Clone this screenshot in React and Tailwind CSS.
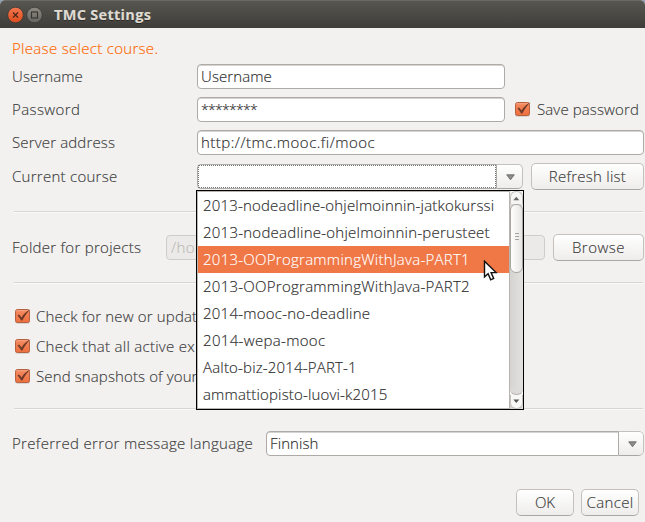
const COURSES = [
  { name: "2013-nodeadline-ohjelmoinnin-jatkokurssi", tracking: "tracking-[0.18px]" },
  { name: "2013-nodeadline-ohjelmoinnin-perusteet", tracking: "tracking-[0.24px]" },
  { name: "2013-OOProgrammingWithJava-PART1", tracking: "tracking-[0.26px]", selected: true },
  { name: "2013-OOProgrammingWithJava-PART2", tracking: "tracking-[0.26px]" },
  { name: "2014-mooc-no-deadline", tracking: "tracking-[0.24px]" },
  { name: "2014-wepa-mooc", tracking: "tracking-[0.33px]" },
  { name: "Aalto-biz-2014-PART-1", tracking: "tracking-[0.18px]" },
  { name: "ammattiopisto-luovi-k2015", tracking: "tracking-[0.17px]" },
];

const FIELD =
  "flex h-[25px] items-center rounded-[4px] border border-[#aeaba6] bg-white pl-[3px] pb-px text-[#2c2c2c] shadow-[inset_0_1px_0_#d5d3d0]";

function CheckBox() {
  return (
    <svg width="18" height="17" viewBox="0 0 18 17" className="shrink-0">
      <defs>
        <linearGradient id="box" x1="0" y1="0" x2="0" y2="1">
          <stop offset="0" stopColor="#f58a62" />
          <stop offset="1" stopColor="#ee6f3f" />
        </linearGradient>
      </defs>
      <rect x="1" y="2" width="15" height="14" rx="2.5" fill="#d9d5d2" />
      <rect x="1.5" y="1.5" width="14" height="13" rx="2" fill="url(#box)" stroke="#b5603f" />
      <path d="M2.5 2.7h12" stroke="#f9ab8c" strokeWidth="0.8" />
      <path d="M3.4 7.6 5 6.4 7.6 9.4C9.6 6 12 3.6 16.6 1.2 13 4.5 10.6 8.2 8.3 12.4H7.1C6 10.4 4.9 9 3.4 7.6Z" fill="#6d3a28" />
    </svg>
  );
}

function Divider() {
  return <div className="ml-[14px] mr-[2px] h-[2px] shrink-0 border-t border-[#d8d6d3] bg-[#fafafa]" />;
}

function Button({ className, children }) {
  return (
    <div
      className={`flex h-[27px] shrink-0 items-center justify-center rounded-[5px] border border-[#c4c1bd] border-b-[#aaa7a3] bg-linear-to-b from-white to-[#eeedeb] pb-px text-[#3c3c3c] ${className}`}
    >
      {children}
    </div>
  );
}

function ComboArrow() {
  return (
    <div className="flex h-[25px] w-[26px] shrink-0 items-center justify-center rounded-r-[5px] border border-l-0 border-[#c4c1bd] border-b-[#aaa7a3] bg-linear-to-b from-white to-[#eeedeb] pl-[2px] pt-[2px]">
      <svg width="9" height="7" viewBox="0 0 9 7">
        <path d="M.7.8h7.6L4.5 5.8Z" fill="#8c8c8c" stroke="#626262" strokeWidth="0.8" />
      </svg>
    </div>
  );
}

function ScrollBar() {
  return (
    <div className="flex w-[14px] flex-col border-l border-[#b7b4b0] bg-linear-to-r from-[#d5d4d1] to-[#e2e1df]">
      <div className="bg-[#f5f5f4]">
        <div className="h-[13px] rounded-t-[6px] border border-b-0 border-[#c3c1bd] bg-[#f5f5f4]">
          <svg width="11" height="11" viewBox="0 0 11 11">
            <path d="M2.3 8.2 5.3 4.7l3 3.5Z" fill="#666" />
          </svg>
        </div>
      </div>
      <div className="flex h-[69px] flex-col items-center justify-center gap-[2px] rounded-[6px] border border-[#aaa7a3] bg-linear-to-r from-white to-[#e6e5e3] pb-[4px]">
        <div className="h-px w-[4px] bg-[#a5a3a0]" />
        <div className="h-px w-[4px] bg-[#a5a3a0]" />
        <div className="h-px w-[4px] bg-[#a5a3a0]" />
      </div>
      <div className="mt-[-5px] flex flex-1 flex-col justify-end">
        <div className="flex-1" />
        <div className="bg-[#f5f5f4]">
          <div className="h-[8px] rounded-b-[6px] border-b border-[#b7b4b0] bg-linear-to-r from-[#d8d7d4] to-[#e0dfdd]" />
        </div>
        <div className="h-[14px] rounded-b-[6px] border border-t-0 border-[#c3c1bd] bg-[#f8f8f7]">
          <svg width="11" height="11" viewBox="0 0 11 11">
            <path d="M2.3 4.5h6L5.3 8Z" fill="#555" />
          </svg>
        </div>
      </div>
    </div>
  );
}

function CourseList() {
  return (
    <div className="absolute left-[-1px] top-[26px] z-10 flex h-[220px] w-[328px] border border-black bg-white">
      <div className="flex-1 border-l border-t border-b border-[#b9b6b2]">
        {COURSES.map((c) => (
          <div
            key={c.name}
            className={`flex h-[27px] items-center pb-[2px] pl-[5px] whitespace-nowrap ${c.tracking} ${
              c.selected ? "bg-[#f07746] text-white" : "text-[#2c2c2c]"
            }`}
          >
            {c.name}
          </div>
        ))}
      </div>
      <ScrollBar />
      <svg width="15" height="22" viewBox="0 0 15 22" className="absolute left-[286px] top-[69px]">
        <path
          d="M1.5 1.2V17l3.6-3.3 2.6 6.1 3-1.3-2.6-5.9h5Z"
          fill="#fff"
          stroke="#111"
          strokeWidth="1.4"
        />
      </svg>
    </div>
  );
}

function TitleBar() {
  return (
    <div className="flex h-[28px] shrink-0 items-center rounded-t-[5px] border-t border-[#6b6963] bg-linear-to-b from-[#575650] to-[#3e3d39] pl-[7px]">
      <svg width="36" height="18" viewBox="0 0 36 18">
        <defs>
          <linearGradient id="close" x1="0" y1="0" x2="0" y2="1">
            <stop offset="0" stopColor="#f3774f" />
            <stop offset="1" stopColor="#df4c1c" />
          </linearGradient>
          <linearGradient id="max" x1="0" y1="0" x2="0" y2="1">
            <stop offset="0" stopColor="#8c8a83" />
            <stop offset="1" stopColor="#66645e" />
          </linearGradient>
        </defs>
        <circle cx="8.5" cy="9" r="7.8" fill="url(#close)" stroke="#3a3935" strokeWidth="0.8" />
        <path d="m6 6.5 5 5m0-5-5 5" stroke="#4a2719" strokeWidth="1.2" />
        <circle cx="27.5" cy="9" r="7.8" fill="url(#max)" stroke="#3a3935" strokeWidth="0.8" />
        <rect x="24.5" y="6" width="6" height="6" fill="none" stroke="#35342f" strokeWidth="1.1" />
      </svg>
      <span className="ml-[11px] text-[14.5px] font-bold tracking-[0.3px] text-[#dfdbd2] [text-shadow:0_1px_0_#2b2a27]">
        TMC Settings
      </span>
    </div>
  );
}

export default function App() {
  return (
    <div className="h-[522px] w-[645px] overflow-hidden bg-[#8fa3bf]">
      <div className="flex h-full flex-col rounded-t-[5px] bg-[#f2f1f0] font-['Open_Sans',sans-serif] text-[15px] leading-[20px] font-light whitespace-nowrap text-[#3c3c3c] [-webkit-text-stroke:0.15px]">
        <TitleBar />

        <div className="mt-[10px] h-[22px] pl-[12px] tracking-[0.31px] text-[#ff6600]">Please select course.</div>

        <div className="mt-[4px] flex h-[25px] items-center">
          <div className="w-[197px] pb-[2px] pl-[12px] tracking-[0.1px]">Username</div>
          <div className={`${FIELD} w-[308px] tracking-[0.1px]`}>Username</div>
        </div>

        <div className="mt-[8px] flex h-[25px] items-center">
          <div className="w-[197px] pb-[2px] pl-[12px] tracking-[0.4px]">Password</div>
          <div className={`${FIELD} w-[308px]`}>
            <span className="pt-[2px] text-[14px] tracking-[-0.7px]">********</span>
          </div>
          <div className="ml-[9px] flex items-center">
            <CheckBox />
            <span className="ml-[5px] pb-[2px] tracking-[0.12px]">Save password</span>
          </div>
        </div>

        <div className="mt-[8px] flex h-[25px] items-center">
          <div className="w-[197px] pb-[2px] pl-[12px] tracking-[0.15px]">Server address</div>
          <div className={`${FIELD} w-[447px] tracking-[0.48px]`}>http://tmc.mooc.fi/mooc</div>
        </div>

        <div className="mt-[8px] flex h-[27px] items-center">
          <div className="w-[197px] pb-[2px] pl-[12px] tracking-[0.27px]">Current course</div>
          <div className="relative flex w-[326px]">
            <div className="h-[25px] w-[301px] rounded-l-[4px] border border-[#aeaba6] bg-white">
              <div className="h-full w-full border border-dotted border-[#777]" />
            </div>
            <ComboArrow />
            <CourseList />
          </div>
          <Button className="ml-[8px] w-[113px] tracking-[0.25px]">Refresh list</Button>
        </div>

        <div className="mt-[21px] flex flex-col">
          <Divider />
        </div>

        <div className="mt-[21px] flex h-[27px] items-center">
          <div className="w-[166px] pb-[2px] pl-[12px] tracking-[0.28px]">Folder for projects</div>
          <div className="flex h-[25px] w-[379px] items-center rounded-[4px] border border-[#cfcdca] bg-[#ebeae8] pb-px pl-[4px] text-[#bdbbb8]">
            <span className="w-[26px] overflow-hidden tracking-[0.4px]">/hom</span>
          </div>
          <Button className="ml-[8px] w-[91px] tracking-[0.5px]">Browse</Button>
        </div>

        <div className="mt-[21px] flex flex-col">
          <Divider />
        </div>

        <div className="mt-[17px] flex flex-col pl-[14px]">
          <div className="flex h-[30px] items-center">
            <CheckBox />
            <span className="ml-[4px] w-[161px] overflow-hidden tracking-[0.16px]">Check for new or updat</span>
          </div>
          <div className="flex h-[30px] items-center">
            <CheckBox />
            <span className="ml-[4px] w-[161px] overflow-hidden tracking-[0.28px]">Check that all active ex</span>
          </div>
          <div className="flex h-[30px] items-center">
            <CheckBox />
            <span className="ml-[4px] w-[161px] overflow-hidden tracking-[0.12px]">Send snapshots of your</span>
          </div>
        </div>

        <div className="mt-[17px] flex flex-col">
          <Divider />
        </div>

        <div className="mt-[21px] flex h-[25px] items-center">
          <div className="w-[266px] pb-[2px] pl-[12px] tracking-[0.32px]">Preferred error message language</div>
          <div className="flex h-[25px] w-[353px] items-center rounded-l-[4px] border border-[#aeaba6] bg-white pb-px pl-[3px] tracking-[0.1px] text-[#2c2c2c] shadow-[inset_0_1px_0_#d5d3d0]">
            Finnish
          </div>
          <div className="w-[25px] overflow-hidden rounded-r-[5px]">
            <div className="flex h-[25px] items-center justify-center rounded-r-[5px] border border-l-0 border-[#c4c1bd] border-b-[#aaa7a3] bg-linear-to-b from-white to-[#eeedeb] pl-[2px] pt-[2px]">
              <svg width="9" height="7" viewBox="0 0 9 7">
                <path d="M.7.8h7.6L4.5 5.8Z" fill="#8c8c8c" stroke="#626262" strokeWidth="0.8" />
              </svg>
            </div>
          </div>
        </div>

        <div className="mt-[33px] flex justify-end gap-[7px] pr-[6px]">
          <Button className="w-[58px]">OK</Button>
          <Button className="w-[58px] tracking-[0.35px]">Cancel</Button>
        </div>
      </div>
    </div>
  );
}
